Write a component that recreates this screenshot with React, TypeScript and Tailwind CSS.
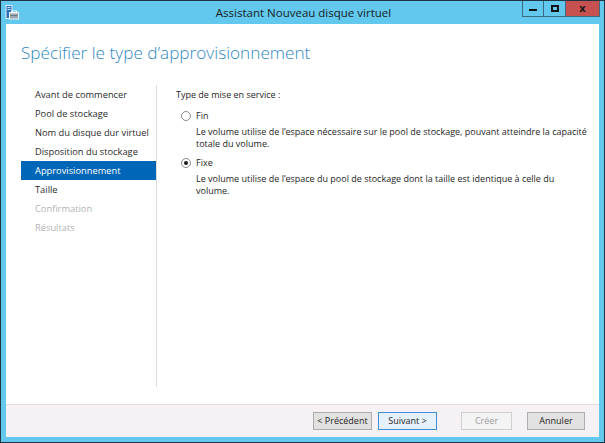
import React from "react";

const font = { fontFamily: '"Open Sans", "Noto Sans", sans-serif' };

function AppIcon() {
  return (
    <svg width="14" height="15" viewBox="0 0 14 15">
      <rect x="1" y="0.5" width="6" height="13" fill="#2f6fb7" stroke="#dfefff" strokeWidth="1" />
      <rect x="2.5" y="2" width="3" height="1" fill="#bfe1ff" />
      <rect x="2.5" y="4" width="3" height="1" fill="#bfe1ff" />
      <rect x="4.5" y="7.5" width="9" height="6.5" fill="#9aa6b2" stroke="#eef4fa" strokeWidth="1" />
      <rect x="6.5" y="6" width="5" height="2" fill="none" stroke="#eef4fa" strokeWidth="1" />
      <rect x="5.5" y="10" width="7" height="1" fill="#6c7987" />
    </svg>
  );
}

function Radio({ checked }: { checked?: boolean }) {
  return (
    <span className="flex h-[10px] w-[10px] items-center justify-center rounded-full border border-[#8a8a8a] bg-white">
      {checked && <span className="h-[4px] w-[4px] rounded-full bg-[#1a1a1a]" />}
    </span>
  );
}

const steps: { label: string; state: "done" | "active" | "disabled" }[] = [
  { label: "Avant de commencer", state: "done" },
  { label: "Pool de stockage", state: "done" },
  { label: "Nom du disque dur virtuel", state: "done" },
  { label: "Disposition du stockage", state: "done" },
  { label: "Approvisionnement", state: "active" },
  { label: "Taille", state: "done" },
  { label: "Confirmation", state: "disabled" },
  { label: "Résultats", state: "disabled" },
];

export default function App() {
  return (
    <div
      className="flex h-[443px] w-[605px] flex-col border border-[#1f3442] bg-[#62c8ee] text-[9px] text-[#1e1e1e]"
      style={font}
    >
      {/* Title bar */}
      <div className="flex h-[23px] shrink-0 items-start">
        <div className="ml-[4px] mt-[4px] w-[16px]">
          <AppIcon />
        </div>
        <div className="flex h-[23px] flex-1 items-center justify-center pl-[64px] text-[11.5px] text-[#1b1b1b]">
          Assistant Nouveau disque virtuel
        </div>
        <div className="mr-[4px] flex h-[16px] items-stretch">
          <div className="flex w-[22px] items-center justify-center border border-t-0 border-[#3a6b80]">
            <span className="mt-[3px] h-[2px] w-[8px] bg-[#111]" />
          </div>
          <div className="flex w-[22px] items-center justify-center border border-l-0 border-t-0 border-[#3a6b80]">
            <span className="h-[7px] w-[8px] border-2 border-[#111]" />
          </div>
          <div className="flex w-[34px] items-center justify-center border border-l-0 border-t-0 border-[#3a6b80] bg-[#c75050] text-[11px] font-bold text-[#1a1a1a]">
            x
          </div>
        </div>
      </div>

      {/* Client area */}
      <div className="mx-[5px] mb-[5px] flex flex-1 flex-col bg-white">
        <div className="flex flex-1 flex-col">
          <div className="pl-[15px] pt-[16px] text-[17.2px] font-light leading-[26px] text-[#3089c2]">
            Spécifier le type d’approvisionnement
          </div>
          <div className="mt-[19px] flex h-[302px]">
            <div className="w-[151px] border-r border-[#dcdcdc] pl-[15px]">
              {steps.map((s) => (
                <div
                  key={s.label}
                  className={
                    "flex h-[19px] items-center pl-[14px] text-[9.3px] " +
                    (s.state === "active"
                      ? "bg-[#0067b8] text-white"
                      : s.state === "disabled"
                      ? "text-[#b3b3b3]"
                      : "text-[#2a2a2a]")
                  }
                >
                  {s.label}
                </div>
              ))}
            </div>
            <div className="flex-1 pl-[19px] pt-[3px]">
              <div className="leading-[14px]">Type de mise en service :</div>
              <div className="mt-[7px] flex items-center gap-[5px] pl-[5px] leading-[14px]">
                <Radio />
                <span>Fin</span>
              </div>
              <div className="mt-[3px] pl-[20px] leading-[12px]">
                Le volume utilise de l’espace nécessaire sur le pool de stockage, pouvant atteindre la capacité
                <br />
                totale du volume.
              </div>
              <div className="mt-[6px] flex items-center gap-[5px] pl-[5px] leading-[14px]">
                <Radio checked />
                <span>Fixe</span>
              </div>
              <div className="mt-[3px] pl-[20px] leading-[12px]">
                Le volume utilise de l’espace du pool de stockage dont la taille est identique à celle du
                <br />
                volume.
              </div>
            </div>
          </div>
        </div>
        {/* Footer */}
        <div className="flex h-[33px] shrink-0 items-center justify-end border-t border-[#dfdfdf] bg-[#f5f1f5] pr-[14px]">
          <button className="h-[18px] w-[59px] border border-[#adadad] bg-[#e1e1e1] text-[9px] text-[#1e1e1e]" style={font}>
            &lt; Précédent
          </button>
          <button className="ml-[6px] h-[18px] w-[59px] border border-[#3c8fd6] bg-[#e5f1fb] text-[9px] text-[#1e1e1e]" style={font}>
            Suivant &gt;
          </button>
          <button className="ml-[24px] h-[18px] w-[51px] border border-[#cfcfcf] bg-[#f4f4f4] text-[9px] text-[#9e9e9e]" style={font}>
            Créer
          </button>
          <button className="ml-[15px] h-[18px] w-[58px] border border-[#adadad] bg-[#e1e1e1] text-[9px] text-[#1e1e1e]" style={font}>
            Annuler
          </button>
        </div>
      </div>
    </div>
  );
}
